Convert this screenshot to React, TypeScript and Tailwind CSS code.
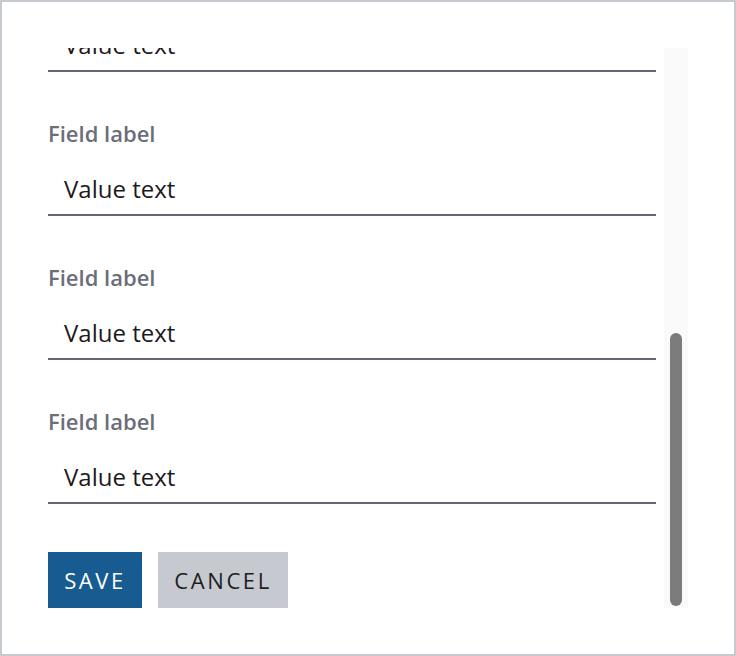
import React from 'react';

const fields = Array.from({ length: 4 }, (_, i) => ({ id: i, label: 'Field label', value: 'Value text' }));

const Field: React.FC<{ label: string; value: string }> = ({ label, value }) => (
  <div className="flex flex-col shrink-0">
    <label className="text-[22px] leading-[30px] font-semibold text-[#6b6e78] -mt-px mb-px">{label}</label>
    <div className="pt-[24px] pb-[9px] pl-4 text-[24px] leading-[32px] text-[#1b1b1d] border-b-2 border-[#63666f]">
      {value}
    </div>
  </div>
);

export default function App() {
  return (
    <div
      className="w-[736px] h-[656px] border-2 border-[#c6cad1] bg-white pl-[46px] pt-[46px]"
      style={{ fontFamily: '"Open Sans", "Noto Sans", sans-serif' }}
    >
      <div className="flex h-[560px] gap-2">
        {/* zone de contenu, défilée jusqu'en bas */}
        <div className="w-[608px] h-full overflow-hidden flex flex-col justify-end gap-[47px]">
          {fields.map((f) => (
            <Field key={f.id} label={f.label} value={f.value} />
          ))}
          <div className="flex gap-4 shrink-0 mt-px">
            <button className="h-14 w-[94px] bg-[#175b90] text-white text-[22px] font-medium tracking-[2.6px] uppercase">
              Save
            </button>
            <button className="h-14 w-[130px] bg-[#c6c9d0] text-[#1d1d20] text-[22px] font-medium tracking-[2.6px] uppercase">
              Cancel
            </button>
          </div>
        </div>

        {/* barre de défilement */}
        <div className="w-6 h-full bg-[#fafafa] flex flex-col justify-end px-[6px] pb-[2px]">
          <div className="h-[273px] w-full rounded-full bg-[#7b7b7b]" />
        </div>
      </div>
    </div>
  );
}
